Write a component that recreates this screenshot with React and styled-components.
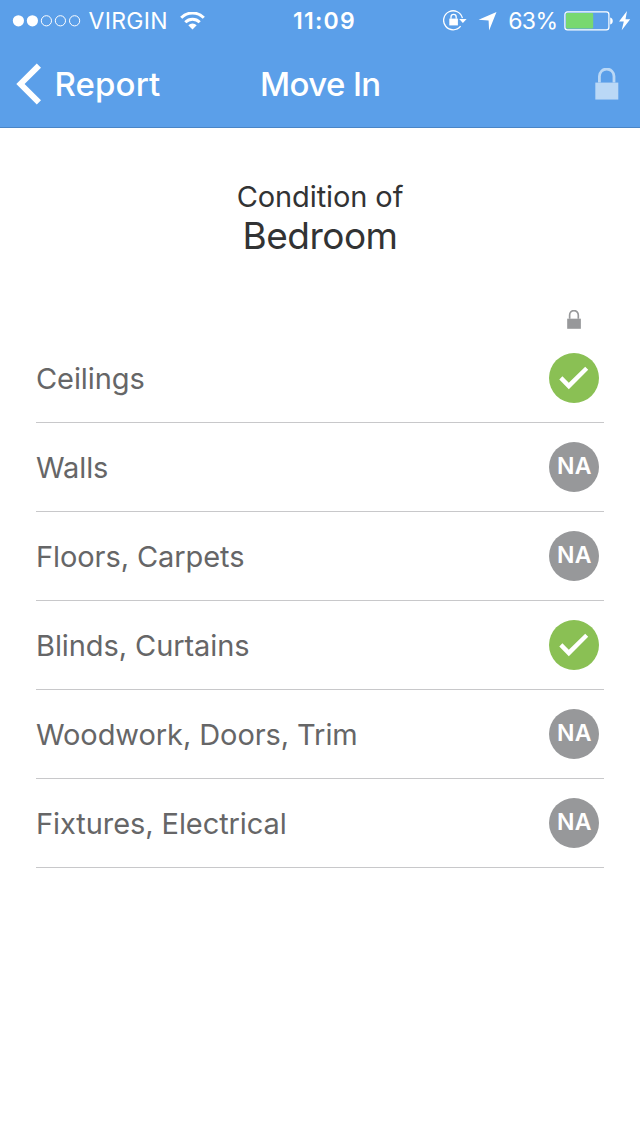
import React from 'react';
import styled, { createGlobalStyle } from 'styled-components';

const GlobalStyle = createGlobalStyle`
  * {
    box-sizing: border-box;
  }

  body {
    margin: 0;
    background: #ffffff;
    font-family: Inter, 'Liberation Sans', sans-serif;
  }

  svg {
    display: block;
    flex: none;
  }
`;

const Screen = styled.div`
  width: 640px;
  min-height: 1136px;
  background: #ffffff;
`;

// Blue header: status bar + navigation
const Header = styled.header`
  height: 128px;
  background: #5b9fe9;
  border-bottom: 1px solid #4a85c6;
  color: #ffffff;
`;

const StatusBar = styled.div`
  display: grid;
  grid-template-columns: 1fr auto 1fr;
  align-items: center;
  height: 41px;
  padding: 0 9px 0 12px;
`;

const StatusGroup = styled.div`
  display: flex;
  align-items: center;
  justify-content: ${({ $end }) => ($end ? 'flex-end' : 'flex-start')};
`;

const Carrier = styled.span`
  margin: 0 12px 0 7.5px;
  font-size: 23px;
  line-height: 28px;
  letter-spacing: 0.3px;
`;

const Clock = styled.span`
  margin-left: 6px;
  font-size: 23px;
  font-weight: 600;
  line-height: 28px;
  letter-spacing: 1.3px;
`;

const Percent = styled.span`
  margin: 0 6.6px 0 11.4px;
  font-size: 23px;
  line-height: 28px;
  letter-spacing: -0.6px;
`;

const Spacer = styled.span`
  width: ${({ $width }) => $width || 11}px;
`;

const NavBar = styled.nav`
  display: grid;
  grid-template-columns: 1fr auto 1fr;
  align-items: center;
  height: 86px;
  padding: 0 21.5px 0 16px;
`;

const BackButton = styled.button`
  display: flex;
  align-items: center;
  gap: 12.6px;
  padding: 0;
  border: 0;
  background: none;
  color: inherit;
  font: 500 33px/40px Inter, 'Liberation Sans', sans-serif;
  letter-spacing: 0.1px;
`;

const Title = styled.h1`
  margin: 0 0 0 6px;
  font-size: 33px;
  font-weight: 500;
  line-height: 40px;
  letter-spacing: -0.6px;
`;

const NavAction = styled.div`
  display: flex;
  justify-content: flex-end;
`;

// Page content
const Content = styled.main`
  padding: 49px 36px 0;
`;

const Heading = styled.h2`
  display: flex;
  flex-direction: column;
  align-items: center;
  margin: 0;
  color: #323334;
  font-weight: 400;
`;

const HeadingLabel = styled.span`
  font-size: 29px;
  line-height: 39px;
  letter-spacing: -0.1px;
`;

const HeadingRoom = styled.span`
  font-size: 37px;
  line-height: 40px;
  letter-spacing: -0.5px;
`;

const ListHeader = styled.div`
  display: flex;
  justify-content: flex-end;
  height: 78px;
  padding: 54px 23px 0 0;
`;

const List = styled.ul`
  margin: 0;
  padding: 0;
  list-style: none;
`;

const Row = styled.li`
  display: flex;
  align-items: center;
  justify-content: space-between;
  height: 89px;
  padding-right: 5px;
  border-bottom: 1px solid #c8c8ca;
`;

const RowLabel = styled.span`
  padding-top: 2px;
  color: #666667;
  font-size: 29px;
  line-height: 36px;
  letter-spacing: -0.08px;
`;

const Badge = styled.span`
  display: flex;
  align-items: center;
  justify-content: center;
  width: 50px;
  height: 50px;
  padding: ${({ $checked }) => ($checked ? '0' : '0 0 1px 1px')};
  border-radius: 50%;
  background: ${({ $checked }) => ($checked ? '#8ac054' : '#97989a')};
  color: #ffffff;
  font-size: 23px;
  font-weight: 600;
  line-height: 27px;
  letter-spacing: 0.3px;
`;

const SignalDots = () => (
  <svg width="69" height="14" viewBox="0 0 69 14" fill="none">
    <circle cx="6.4" cy="6.8" r="5.6" fill="#fff" />
    <circle cx="20.4" cy="6.8" r="5.6" fill="#fff" />
    <circle cx="34.4" cy="6.8" r="5.1" stroke="#fff" />
    <circle cx="48.4" cy="6.8" r="5.1" stroke="#fff" />
    <circle cx="62.6" cy="6.8" r="5.1" stroke="#fff" />
  </svg>
);

const WifiIcon = () => (
  <svg width="25" height="18" viewBox="0 0 25 18" fill="none" stroke="#fff" strokeWidth="3">
    <path d="M1.2 5.7a16 16 0 0 1 22.6 0" />
    <path d="M5.3 10.2a10.2 10.2 0 0 1 14.4 0" />
    <path d="M8.3 13.2a6 6 0 0 1 8.4 0L12.5 17.4Z" fill="#fff" stroke="none" />
  </svg>
);

const RotationLockIcon = () => (
  <svg width="24" height="21" viewBox="0 0 24 21" fill="none" stroke="#fff">
    <path d="M19.4 8.2A9.5 9.5 0 1 0 17.6 16.2" strokeWidth="1.3" />
    <path d="M16.2 9h7.4l-3.7 4Z" fill="#fff" stroke="none" />
    <rect x="6.3" y="8.6" width="8.6" height="6.8" fill="#fff" stroke="none" />
    <path d="M8 8.8V6.9a2.6 2.6 0 0 1 5.2 0v1.9" strokeWidth="1.3" />
  </svg>
);

const LocationIcon = () => (
  <svg width="19" height="20" viewBox="0 0 19 20">
    <path d="M18.5 0.9 11.1 19.4 10.6 9.6 0.6 8.8Z" fill="#fff" />
  </svg>
);

const BatteryIcon = () => (
  <svg width="50" height="20" viewBox="0 0 50 20" fill="none">
    <rect x="0.9" y="0.8" width="44" height="18" rx="2.6" stroke="#fff" strokeWidth="1.2" />
    <rect x="2" y="2" width="27.2" height="15.6" rx="1" fill="#78d870" />
    <path d="M46.2 6.4c3.4 0.4 3.4 6.6 0 7Z" fill="#fff" />
  </svg>
);

const BoltIcon = () => (
  <svg width="12" height="20" viewBox="0 0 12 20">
    <path d="M8 0 0 10.5h4.8L2.7 19.3 11.2 8.2H6.5Z" fill="#fff" />
  </svg>
);

const ChevronLeft = () => (
  <svg width="26" height="42" viewBox="0 0 26 42">
    <path d="M20.8 0.6 25 4.8 8.6 21 25 37.2 20.8 41.6 0.3 21Z" fill="#fff" />
  </svg>
);

const LockIcon = ({ width, color }) => (
  <svg width={width} height={width * 1.36} viewBox="0 0 23.5 32" fill="none">
    <rect x="0.3" y="14.6" width="23" height="17" fill={color} />
    <path d="M4.4 14.6V8.3a7.3 7.3 0 0 1 14.6 0v6.3" stroke={color} strokeWidth="2.8" />
  </svg>
);

const CheckIcon = () => (
  <svg width="50" height="50" viewBox="0 0 50 50">
    <path d="M10.3 26.4 13.4 23.3 19.8 29.7 36.2 13.7 39.2 16.7 19.8 36.2Z" fill="#fff" />
  </svg>
);

const items = [
  { label: 'Ceilings', checked: true },
  { label: 'Walls', checked: false },
  { label: 'Floors, Carpets', checked: false },
  { label: 'Blinds, Curtains', checked: true },
  { label: 'Woodwork, Doors, Trim', checked: false },
  { label: 'Fixtures, Electrical', checked: false },
];

const App = () => {
  return (
    <Screen>
      <GlobalStyle />
      <Header>
        <StatusBar>
          <StatusGroup>
            <SignalDots />
            <Carrier>VIRGIN</Carrier>
            <WifiIcon />
          </StatusGroup>
          <Clock>11:09</Clock>
          <StatusGroup $end>
            <RotationLockIcon />
            <Spacer />
            <LocationIcon />
            <Percent>63%</Percent>
            <BatteryIcon />
            <Spacer $width={5} />
            <BoltIcon />
          </StatusGroup>
        </StatusBar>
        <NavBar>
          <BackButton>
            <ChevronLeft />
            Report
          </BackButton>
          <Title>Move In</Title>
          <NavAction>
            <LockIcon width={23.5} color="#bad8f6" />
          </NavAction>
        </NavBar>
      </Header>
      <Content>
        <Heading>
          <HeadingLabel>Condition of</HeadingLabel>
          <HeadingRoom>Bedroom</HeadingRoom>
        </Heading>
        <ListHeader>
          <LockIcon width={14} color="#97989a" />
        </ListHeader>
        <List>
          {items.map(({ label, checked }) => (
            <Row key={label}>
              <RowLabel>{label}</RowLabel>
              <Badge $checked={checked}>{checked ? <CheckIcon /> : 'NA'}</Badge>
            </Row>
          ))}
        </List>
      </Content>
    </Screen>
  );
};

export default App;
